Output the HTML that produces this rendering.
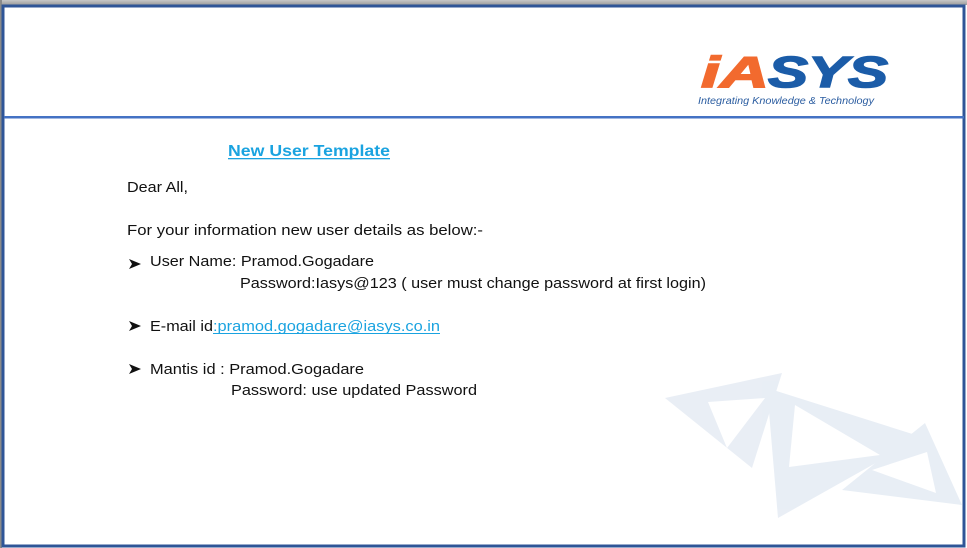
<!DOCTYPE html>
<html><head><meta charset="utf-8"><style>
html,body{margin:0;padding:0;width:967px;height:548px;overflow:hidden;background:#fff}
svg{display:block}
text{font-family:"Liberation Sans",sans-serif;font-size:15px;fill:#111}
</style></head><body>
<svg width="967" height="548" viewBox="0 0 967 548">
<defs><linearGradient id="g" x1="0" y1="0" x2="0" y2="1"><stop offset="0" stop-color="#c8c8c8"/><stop offset="1" stop-color="#9a9a9a"/></linearGradient></defs>
<rect x="0" y="0" width="967" height="548" fill="#fff"/>
<rect x="0" y="0" width="967" height="5" fill="url(#g)"/>
<rect x="0" y="0" width="2" height="548" fill="#8a8a8a"/>
<rect x="3" y="6" width="961" height="540" fill="none" stroke="#2f5597" stroke-width="3"/>
<rect x="4" y="116" width="960" height="2.5" fill="#4472c4"/>
<!-- logo -->
<text x="701" y="87" style="font-size:44px;fill:#f26a2e;font-weight:bold;font-style:italic;stroke:#f26a2e;stroke-width:1.5" textLength="68" lengthAdjust="spacingAndGlyphs">iA</text>
<text x="768" y="87" style="font-size:44px;fill:#1b5ca8;font-weight:bold;font-style:italic;stroke:#1b5ca8;stroke-width:1.5" textLength="120" lengthAdjust="spacingAndGlyphs">SYS</text>
<text x="698" y="104" style="font-size:10px;fill:#2a5ca0;font-style:italic" textLength="176" lengthAdjust="spacingAndGlyphs">Integrating Knowledge &amp; Technology</text>
<!-- triangles -->
<g fill="#e3eaf3" opacity="0.8">
<path d="M665,398 L782,373 L752,468 Z M708,402 L765,398 L727,448 Z" fill-rule="evenodd"/>
<path d="M767,388 L922,437 L778,518 Z M795,405 L880,455 L789,467 Z" fill-rule="evenodd"/>
<path d="M925,423 L962,505 L842,490 Z M872,470 L927,452 L936,493 Z" fill-rule="evenodd"/>
</g>
<!-- text -->
<text x="228" y="156" style="font-weight:bold;fill:#1aa3e0;font-size:16px" textLength="162" lengthAdjust="spacingAndGlyphs">New User Template</text>
<rect x="228" y="158" width="162" height="1.3" fill="#1aa3e0"/>
<text x="127" y="192" textLength="61" lengthAdjust="spacingAndGlyphs">Dear All,</text>
<text x="127" y="235" textLength="356" lengthAdjust="spacingAndGlyphs">For your information new user details as below:-</text>
<g fill="#111">
<path d="M129,259 L141,264 L129,269 L132,264 Z"/>
<path d="M129,321 L141,326 L129,331 L132,326 Z"/>
<path d="M129,364 L141,369 L129,374 L132,369 Z"/>
</g>
<text x="150" y="266" textLength="224" lengthAdjust="spacingAndGlyphs">User Name: Pramod.Gogadare</text>
<text x="240" y="288" textLength="466" lengthAdjust="spacingAndGlyphs">Password:Iasys@123 ( user must change password at first login)</text>
<text x="150" y="331" textLength="63" lengthAdjust="spacingAndGlyphs">E-mail id</text>
<text x="213" y="331" style="fill:#1aa3e0" textLength="227" lengthAdjust="spacingAndGlyphs">:pramod.gogadare@iasys.co.in</text>
<rect x="213" y="333" width="227" height="1" fill="#1aa3e0"/>
<text x="150" y="374" textLength="214" lengthAdjust="spacingAndGlyphs">Mantis id : Pramod.Gogadare</text>
<text x="231" y="395" textLength="246" lengthAdjust="spacingAndGlyphs">Password:  use updated Password</text>
</svg>
</body></html>
